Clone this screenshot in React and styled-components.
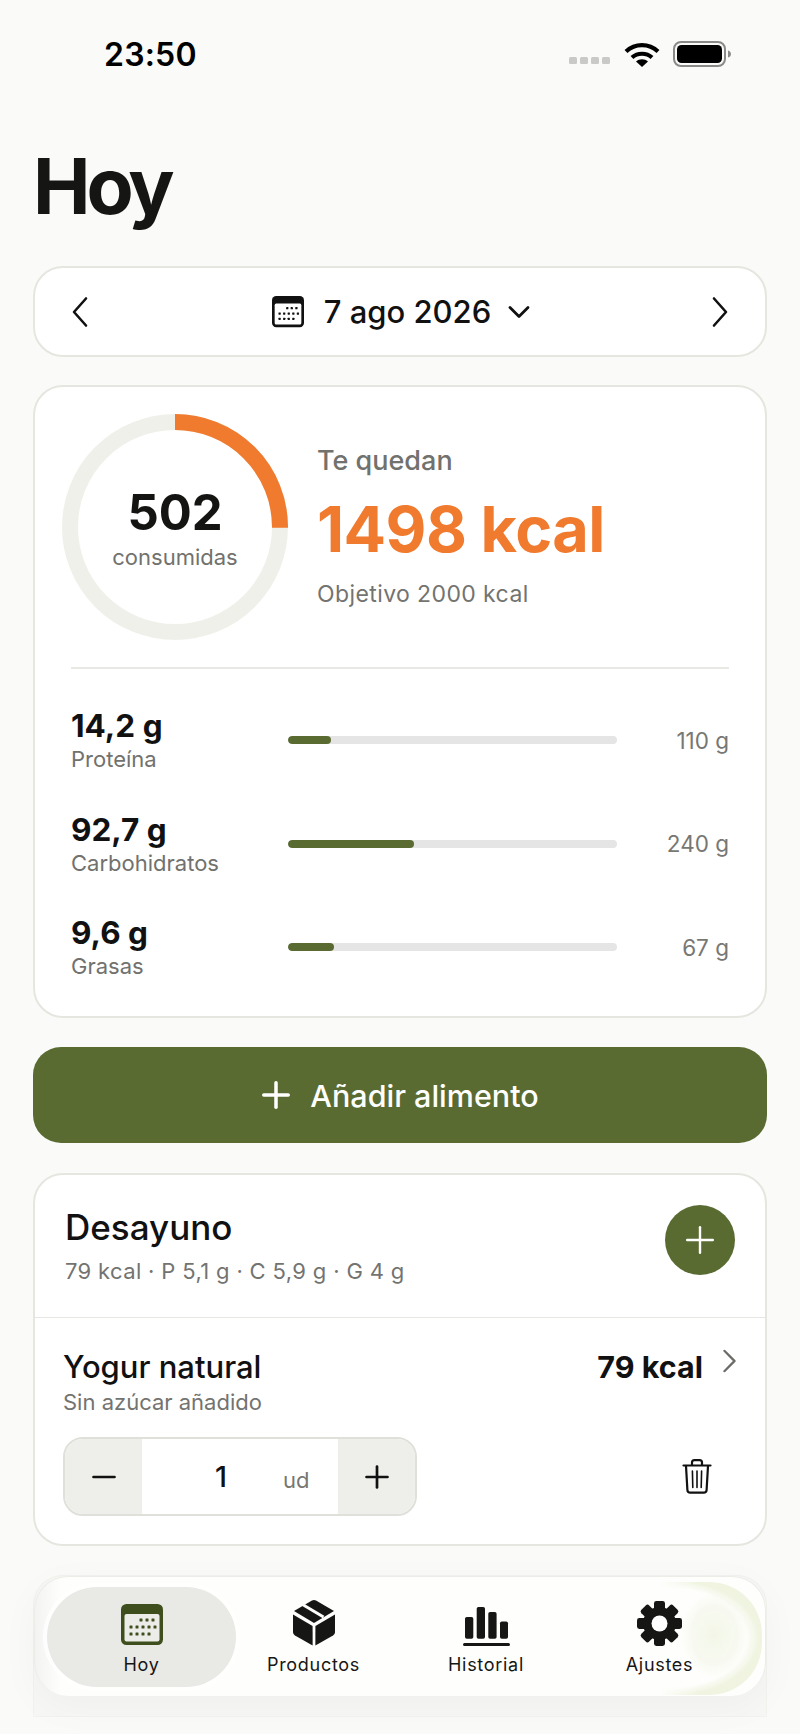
import React from "react";
import styled, { createGlobalStyle } from "styled-components";
import { Plus, Minus } from "lucide-react";

const GlobalStyle = createGlobalStyle`
    html, body {
        margin: 0;
        padding: 0;
        background: #fafaf8;
    }
    * {
        box-sizing: border-box;
    }
`;

const Page = styled.div`
    position: relative;
    width: 800px;
    height: 1734px;
    overflow: hidden;
    padding: 0 33px;
    background: #fafaf8;
    color: #141412;
    font-family: Inter, "Liberation Sans", sans-serif;
`;

const StatusBar = styled.div`
    display: flex;
    justify-content: space-between;
    align-items: center;
    height: 56px;
    margin: 26px 0 0;
    padding: 0 36px 0 71px;
`;

const Clock = styled.div`
    font-size: 32px;
    font-weight: 600;
    color: #000;
    letter-spacing: 0.2px;
`;

const StatusIcons = styled.div`
    display: flex;
    align-items: center;
    gap: 13px;
`;

const SignalDots = styled.div`
    display: flex;
    gap: 3px;
    margin-top: 13px;
    margin-right: 1px;
`;

const SignalDot = styled.span`
    width: 8px;
    height: 7px;
    border-radius: 1.5px;
    background: #c9c9c7;
`;

const Title = styled.h1`
    margin: 60px 0 0;
    font-size: 77px;
    line-height: 88px;
    font-weight: 700;
    letter-spacing: -4px;
    color: #151513;
`;

const Card = styled.div`
    background: #fff;
    border: 2px solid #e6e6e0;
    border-radius: 30px;
`;

const DateCard = styled(Card)`
    display: flex;
    justify-content: space-between;
    align-items: center;
    height: 91px;
    margin-top: 36px;
    padding: 0 36px;
`;

const DateLabel = styled.div`
    display: flex;
    align-items: center;
    margin-left: 11px;
    font-size: 31px;
    font-weight: 550;
    color: #111;
`;

const DateText = styled.span`
    margin: 0 8px 0 20px;
`;

const SummaryCard = styled(Card)`
    margin-top: 28px;
    height: 633px;
    padding: 27px 27px 0;
`;

const Hero = styled.div`
    display: flex;
    align-items: center;
`;

const RingWrap = styled.div`
    display: grid;
    width: 226px;
    height: 226px;
    place-items: center;
    flex: none;

    & > * {
        grid-area: 1 / 1;
    }
`;

const RingText = styled.div`
    display: flex;
    flex-direction: column;
    align-items: center;
    padding-top: 2px;
`;

const RingValue = styled.div`
    font-size: 49px;
    line-height: 57px;
    font-weight: 700;
`;

const RingLabel = styled.div`
    margin-top: 1px;
    font-size: 22px;
    line-height: 30px;
    color: #71716d;
`;

const Remaining = styled.div`
    margin-left: 29px;
    display: flex;
    flex-direction: column;
`;

const RemainingLabel = styled.div`
    font-size: 27px;
    line-height: 32px;
    font-weight: 550;
    color: #71716d;
`;

const RemainingValue = styled.div`
    margin-top: 16px;
    font-size: 63px;
    line-height: 72px;
    font-weight: 700;
    letter-spacing: -0.6px;
    color: #f07a2e;
`;

const RemainingGoal = styled.div`
    margin-top: 14px;
    font-size: 23px;
    line-height: 30px;
    color: #73736f;
    letter-spacing: 0.4px;
`;

const Divider = styled.div`
    height: 1.5px;
    margin: 27px 9px 20px;
    background: #e8e8e4;
`;

const MacroRow = styled.div`
    display: grid;
    grid-template-columns: 217px 329px 1fr;
    align-items: center;
    height: 103.5px;
    padding: 0 9px;
`;

const MacroName = styled.div`
    display: flex;
    flex-direction: column;
`;

const MacroValue = styled.div`
    font-size: 31.5px;
    line-height: 36px;
    font-weight: 700;
    color: #111;
`;

const MacroLabel = styled.div`
    margin-top: 2px;
    font-size: 22px;
    line-height: 26px;
    color: #71716d;
`;

const MacroTrack = styled.div`
    height: 8px;
    border-radius: 4px;
    background: #e5e5e5;
    overflow: hidden;
`;

const MacroFill = styled.div`
    height: 100%;
    border-radius: 4px;
    background: #5a6b32;
`;

const MacroGoal = styled.div`
    text-align: right;
    font-size: 22.5px;
    color: #777773;
`;

const AddButton = styled.div`
    display: flex;
    justify-content: center;
    align-items: center;
    gap: 13px;
    height: 96px;
    margin-top: 29px;
    padding-right: 6px;
    border-radius: 28px;
    background: #5a6b32;
    color: #fff;
    font-size: 30.5px;
    font-weight: 550;
`;

const MealCard = styled(Card)`
    height: 373px;
    margin-top: 30px;
`;

const MealHeader = styled.div`
    display: flex;
    justify-content: space-between;
    align-items: center;
    height: 143px;
    padding: 0 30px;
    border-bottom: 1.5px solid #e6e6e2;
`;

const MealTitle = styled.div`
    font-size: 35px;
    line-height: 42px;
    font-weight: 550;
    color: #111;
`;

const MealMeta = styled.div`
    margin-top: 8px;
    font-size: 22px;
    line-height: 30px;
    letter-spacing: 0.35px;
    color: #737370;
`;

const RoundAdd = styled.div`
    display: flex;
    justify-content: center;
    align-items: center;
    width: 70px;
    height: 70px;
    margin-bottom: 12px;
    border-radius: 50%;
    background: #5a6b32;
    color: #fff;
`;

const FoodItem = styled.div`
    padding: 30px 28px 0 28px;
`;

const FoodTop = styled.div`
    display: flex;
    justify-content: space-between;
    align-items: flex-start;
`;

const FoodName = styled.div`
    font-size: 31px;
    line-height: 38px;
    font-weight: 500;
    color: #111;
`;

const FoodKcal = styled.div`
    display: flex;
    align-items: flex-start;
    gap: 19px;
    font-size: 30.5px;
    line-height: 38px;
    font-weight: 700;
    color: #111;

    svg {
        margin-top: 1px;
    }
`;

const FoodNote = styled.div`
    margin-top: 1px;
    font-size: 22px;
    line-height: 30px;
    color: #737370;
`;

const FoodControls = styled.div`
    display: flex;
    justify-content: space-between;
    align-items: center;
    margin-top: 20px;
    padding-right: 25px;
`;

const Stepper = styled.div`
    display: grid;
    grid-template-columns: 77px 1fr 77px;
    width: 354px;
    height: 79px;
    border: 2px solid #e0e0da;
    border-radius: 20px;
    overflow: hidden;
`;

const StepButton = styled.div`
    display: flex;
    justify-content: center;
    align-items: center;
    background: #eeefea;
    color: #111;
`;

const StepValue = styled.div`
    display: grid;
    grid-template-columns: 1fr 1fr;
    align-items: center;
    background: #fff;
`;

const StepNumber = styled.div`
    text-align: right;
    padding-right: 13px;
    font-size: 29px;
    font-weight: 500;
    color: #111;
`;

const StepUnit = styled.div`
    padding: 6px 0 0 43px;
    font-size: 22px;
    color: #777773;
`;

const NextMealCard = styled(Card)`
    height: 142px;
    margin-top: 29px;
    border-radius: 30px 30px 0 0;
    background: #f7f7f5;
    border: 1.5px solid #f2f2ef;
`;

const TabBar = styled.div`
    position: absolute;
    left: 34px;
    top: 1576px;
    width: 732px;
    height: 120px;
    display: grid;
    grid-template-columns: 173px 171px 174px 173px;
    padding: 10px 0 9px 20px;
    background: linear-gradient(90deg, #f3f3f1, #fefefc 26px);
    border-top: 1px solid #ecece8;
    border-left: 1px solid #ecece8;
    border-right: 1px solid #ecece8;
    border-radius: 34px;
    box-shadow: 0 10px 40px rgba(0, 0, 0, 0.035);
    overflow: hidden;

    &::after {
        content: "";
        position: absolute;
        top: 5px;
        right: 3px;
        bottom: 1px;
        width: 102px;
        border-radius: 0 52px 52px 0;
        background:
            radial-gradient(ellipse 34px 42px at 54px 53px, rgba(238, 243, 224, 0.75), rgba(240, 245, 228, 0.45) 70%, rgba(255, 255, 255, 0) 100%),
            radial-gradient(ellipse 86px 58px at 14px 56px, rgba(254, 254, 252, 0) 84%, rgba(238, 243, 222, 0.9) 98%);
        mask-image: linear-gradient(90deg, transparent, #000 36px);
        pointer-events: none;
    }
`;

const TabItem = styled.div`
    position: relative;
    z-index: 1;
    display: flex;
    flex-direction: column;
    align-items: center;
    justify-content: flex-end;
    gap: 7px;
    padding-bottom: 10px;
    border-radius: 50px;
    margin: 0 ${(props) => (props.$active ? "-8px" : "0")};
    background: ${(props) => (props.$active ? "#e9e9e6" : "transparent")};
    box-shadow: ${(props) => (props.$active ? "0 0 0 4px rgba(255, 255, 255, 0.75)" : "none")};
    color: ${(props) => (props.$active ? "#3f4e1d" : "#161614")};
`;

const TabLabel = styled.div`
    font-size: 18px;
    line-height: 24px;
    font-weight: 400;
    letter-spacing: 0.7px;
    color: #161614;
`;

const WifiIcon = () => (
    <svg width="36" height="27" viewBox="0 0 36 27" fill="none" stroke="#000" strokeWidth="4.2">
        <path d="M2 10.5C11 2 25 2 34 10.5" />
        <path d="M8 16.5C13.5 11.5 22.5 11.5 28 16.5" />
        <path d="M18 26l-6-5.6c3.4-2.8 8.6-2.8 12 0z" fill="#000" stroke="none" />
    </svg>
);

const BatteryIcon = () => (
    <svg width="58" height="26" viewBox="0 0 58 26" fill="none">
        <rect x="1" y="1" width="51" height="24" rx="7" stroke="#8a8a88" strokeWidth="2" />
        <rect x="4" y="4" width="45" height="18" rx="4.5" fill="#000" />
        <path d="M55 9.5c2 .5 3 2 3 3.5s-1 3-3 3.5z" fill="#8a8a88" />
    </svg>
);

// thin iOS style chevron, the left one is the default
const Chevron = ({ width, height, color, strokeWidth, right }) => (
    <svg width={width} height={height} viewBox="0 0 18 32" fill="none" preserveAspectRatio="none">
        <path
            d={right ? "M3 2.5L15 16L3 29.5" : "M15 2.5L3 16L15 29.5"}
            stroke={color}
            strokeWidth={strokeWidth}
            strokeLinecap="round"
            strokeLinejoin="round"
        />
    </svg>
);

const DownChevron = () => (
    <svg width="22" height="14" viewBox="0 0 22 14" fill="none" style={{ margin: "0 9px" }}>
        <path d="M2 2.5L11 11.5L20 2.5" stroke="#111" strokeWidth="2.8" strokeLinecap="round" strokeLinejoin="round" />
    </svg>
);

const CalendarIcon = ({ size, color, paper }) => (
    <svg width={size} height={size} viewBox="0 0 42 42">
        <rect x="0" y="0" width="42" height="41" rx="5.5" fill={color} />
        <rect x="3.5" y="10" width="35" height="27.5" rx="2" fill={paper} />
        {[
            [20, 16],
            [26, 16],
            [32, 16],
            [10, 23],
            [16, 23],
            [22, 23],
            [28, 23],
            [34, 23],
            [10, 30],
            [16, 30],
            [22, 30],
            [28, 30],
        ].map(([x, y]) => (
            <rect key={`${x}-${y}`} x={x - 1.5} y={y - 1.5} width="3" height="3" rx="0.6" fill={color} />
        ))}
    </svg>
);

const BoxIcon = () => (
    <svg width="44" height="47" viewBox="0 0 44 47" fill="#161614">
        <path d="M1 15.5L20.6 27v19.5L3 36.5c-1.2-.7-2-2-2-3.4z" />
        <path d="M43 15.5L23.4 27v19.5L41 36.5c1.2-.7 2-2 2-3.4z" />
        <path d="M20 1.4c1.3-.7 2.7-.7 4 0L42 12 22 24 2 12z" />
        <path d="M11 5.8L31.5 18" stroke="#fefefc" strokeWidth="3" />
    </svg>
);

const BarsIcon = () => (
    <svg width="47" height="39" viewBox="0 0 47 39" fill="#161614">
        <rect x="2" y="10" width="8.3" height="21.7" rx="1.8" />
        <rect x="13.7" y="0" width="8.3" height="31.7" rx="1.8" />
        <rect x="25.3" y="5" width="8.3" height="26.7" rx="1.8" />
        <rect x="37" y="14.4" width="8" height="17.3" rx="1.8" />
        <rect x="0" y="36" width="47" height="3" rx="1.5" />
    </svg>
);

const GearIcon = () => (
    <svg width="45" height="45" viewBox="0 0 45 45" fill="#161614">
        {[0, 45, 90, 135, 180, 225, 270, 315].map((angle) => (
            <rect key={angle} x="17" y="0" width="11" height="12" rx="2.4" transform={`rotate(${angle} 22.5 22.5)`} />
        ))}
        <circle cx="22.5" cy="22.5" r="16.5" />
        <circle cx="22.5" cy="22.5" r="8" fill="#fff" />
    </svg>
);

const TrashIcon = () => (
    <svg width="30" height="35" viewBox="0 0 30 35" fill="none" stroke="#111" strokeWidth="2.2" strokeLinecap="round">
        <path d="M1.5 6.5h27" />
        <path d="M10 6V3.6C10 2.2 11 1.2 12.4 1.2h5.2C19 1.2 20 2.2 20 3.6V6" />
        <path d="M4 7l1.4 24c.1 1.6 1.2 2.7 2.8 2.7h13.6c1.6 0 2.7-1.1 2.8-2.7L26 7" />
        <path d="M10.4 12l.4 16.5M15 12v16.5M19.6 12l-.4 16.5" strokeWidth="1.6" />
    </svg>
);

const macros = [
    { value: "14,2 g", label: "Proteína", goal: "110 g", pct: 13 },
    { value: "92,7 g", label: "Carbohidratos", goal: "240 g", pct: 38.4 },
    { value: "9,6 g", label: "Grasas", goal: "67 g", pct: 14 },
];

const Ring = () => {
    const radius = 105;
    const length = 2 * Math.PI * radius;
    return (
        <svg width="226" height="226" viewBox="0 0 226 226">
            <circle cx="113" cy="113" r={radius} fill="none" stroke="#f0f0eb" strokeWidth="16" />
            <circle
                cx="113"
                cy="113"
                r={radius}
                fill="none"
                stroke="#f07a2e"
                strokeWidth="16"
                strokeDasharray={`${length * 0.251} ${length}`}
                transform="rotate(-90 113 113)"
            />
        </svg>
    );
};

const App = () => {
    return (
        <Page>
            <GlobalStyle />
            <StatusBar>
                <Clock>23:50</Clock>
                <StatusIcons>
                    <SignalDots>
                        <SignalDot />
                        <SignalDot />
                        <SignalDot />
                        <SignalDot />
                    </SignalDots>
                    <WifiIcon />
                    <BatteryIcon />
                </StatusIcons>
            </StatusBar>
            <Title>Hoy</Title>
            <DateCard>
                <Chevron width={18} height={32} color="#111" strokeWidth={2.6} />
                <DateLabel>
                    <CalendarIcon size={32} color="#111" paper="#fff" />
                    <DateText>7 ago 2026</DateText>
                    <DownChevron />
                </DateLabel>
                <Chevron width={18} height={32} color="#111" strokeWidth={2.6} right />
            </DateCard>
            <SummaryCard>
                <Hero>
                    <RingWrap>
                        <Ring />
                        <RingText>
                            <RingValue>502</RingValue>
                            <RingLabel>consumidas</RingLabel>
                        </RingText>
                    </RingWrap>
                    <Remaining>
                        <RemainingLabel>Te quedan</RemainingLabel>
                        <RemainingValue>1498 kcal</RemainingValue>
                        <RemainingGoal>Objetivo 2000 kcal</RemainingGoal>
                    </Remaining>
                </Hero>
                <Divider />
                {macros.map((macro) => (
                    <MacroRow key={macro.label}>
                        <MacroName>
                            <MacroValue>{macro.value}</MacroValue>
                            <MacroLabel>{macro.label}</MacroLabel>
                        </MacroName>
                        <MacroTrack>
                            <MacroFill style={{ width: `${macro.pct}%` }} />
                        </MacroTrack>
                        <MacroGoal>{macro.goal}</MacroGoal>
                    </MacroRow>
                ))}
            </SummaryCard>
            <AddButton>
                <Plus size={42} strokeWidth={2} />
                Añadir alimento
            </AddButton>
            <MealCard>
                <MealHeader>
                    <div>
                        <MealTitle>Desayuno</MealTitle>
                        <MealMeta>79 kcal · P 5,1 g · C 5,9 g · G 4 g</MealMeta>
                    </div>
                    <RoundAdd>
                        <Plus size={44} strokeWidth={1.3} />
                    </RoundAdd>
                </MealHeader>
                <FoodItem>
                    <FoodTop>
                        <FoodName>Yogur natural</FoodName>
                        <FoodKcal>
                            79 kcal
                            <Chevron width={15} height={24} color="#6b6b68" strokeWidth={3} right />
                        </FoodKcal>
                    </FoodTop>
                    <FoodNote>Sin azúcar añadido</FoodNote>
                    <FoodControls>
                        <Stepper>
                            <StepButton>
                                <Minus size={36} strokeWidth={1.8} />
                            </StepButton>
                            <StepValue>
                                <StepNumber>1</StepNumber>
                                <StepUnit>ud</StepUnit>
                            </StepValue>
                            <StepButton>
                                <Plus size={36} strokeWidth={1.8} />
                            </StepButton>
                        </Stepper>
                        <TrashIcon />
                    </FoodControls>
                </FoodItem>
            </MealCard>
            <NextMealCard />
            <TabBar>
                <TabItem $active>
                    <CalendarIcon size={42} color="#3f4e1d" paper="#ecece8" />
                    <TabLabel>Hoy</TabLabel>
                </TabItem>
                <TabItem>
                    <BoxIcon />
                    <TabLabel>Productos</TabLabel>
                </TabItem>
                <TabItem>
                    <BarsIcon />
                    <TabLabel>Historial</TabLabel>
                </TabItem>
                <TabItem>
                    <GearIcon />
                    <TabLabel>Ajustes</TabLabel>
                </TabItem>
            </TabBar>
        </Page>
    );
};

export default App;
